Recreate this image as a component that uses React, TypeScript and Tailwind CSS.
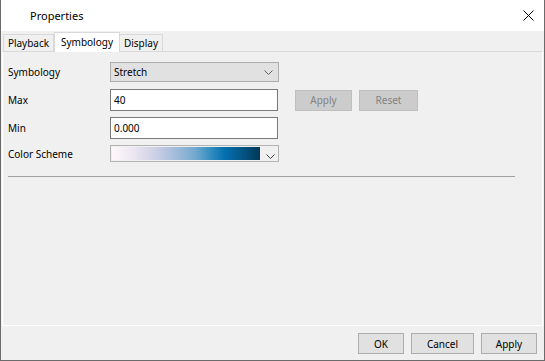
import React from "react";

function Chevron({ className }: { className?: string }) {
  return (
    <svg width="9" height="5" viewBox="0 0 9 5" className={className}>
      <path d="M0.5 0.5 L4.5 4.5 L8.5 0.5" fill="none" stroke="currentColor" strokeWidth="1" />
    </svg>
  );
}

export default function App() {
  return (
    <div
      className="w-[545px] h-[361px] flex flex-col bg-[#f0f0f0] border-x border-b border-[#6b6b6b] text-black overflow-hidden"
      style={{ fontFamily: '"Noto Sans", "Liberation Sans", sans-serif' }}
    >
      {/* Title bar */}
      <div className="h-[31px] bg-white flex items-center justify-between shrink-0">
        <span className="pl-[29px] text-[11px] leading-none">Properties</span>
        <svg width="11" height="11" viewBox="0 0 11 11" className="mr-[10px]">
          <path d="M0.5 0.5 L10.5 10.5 M10.5 0.5 L0.5 10.5" stroke="#000" strokeWidth="1" fill="none" />
        </svg>
      </div>

      {/* Tabs */}
      <div className="h-[20px] mt-[1px] mb-[-1px] pl-[2px] flex items-end relative z-10 shrink-0 text-[10px]">
        <div className="w-[51px] h-[18px] border border-[#d9d9d9] bg-[#f0f0f0] flex items-center justify-center leading-none">
          Playback
        </div>
        <div className="w-[66px] h-[20px] border border-b-0 border-[#d9d9d9] bg-white flex items-center justify-center leading-none pb-[1px]">
          Symbology
        </div>
        <div className="w-[43px] h-[18px] border border-l-0 border-[#d9d9d9] bg-[#f0f0f0] flex items-center justify-center leading-none">
          Display
        </div>
      </div>

      {/* Panel */}
      <div className="h-[275px] ml-[1px] mr-[1px] border border-white border-t-[#d9d9d9] bg-[#f0f0f0] shrink-0 pl-[5px] pt-[10px] text-[10px]">
        <div className="grid grid-cols-[102px_auto] items-center">
          <span className="leading-none">Symbology</span>
          <div className="w-[169px] h-[20px] bg-[#e1e1e1] border border-[#adadad] flex items-center justify-between pl-[3px] pr-[5px]">
            <span className="leading-none">Stretch</span>
            <Chevron className="text-[#606060]" />
          </div>
        </div>

        <div className="grid grid-cols-[102px_auto] items-center mt-[7px]">
          <span className="leading-none">Max</span>
          <div className="flex items-center">
            <div className="w-[168px] h-[22px] bg-white border border-[#7a7a7a] flex items-center pl-[3px]">
              <span className="leading-none">40</span>
            </div>
            <div className="ml-[17px] w-[57px] h-[21px] bg-[#cccccc] border border-[#bfbfbf] flex items-center justify-center text-[#838383] leading-none">
              Apply
            </div>
            <div className="ml-[7px] w-[59px] h-[21px] bg-[#cccccc] border border-[#bfbfbf] flex items-center justify-center text-[#838383] leading-none">
              Reset
            </div>
          </div>
        </div>

        <div className="grid grid-cols-[102px_auto] items-center mt-[6px]">
          <span className="leading-none">Min</span>
          <div className="w-[168px] h-[22px] bg-white border border-[#7a7a7a] flex items-center pl-[3px]">
            <span className="leading-none">0.000</span>
          </div>
        </div>

        <div className="grid grid-cols-[102px_auto] items-center mt-[6px]">
          <span className="leading-none">Color Scheme</span>
          <div className="w-[169px] h-[17px] bg-[#f0f0f0] border border-[#b4b4b4] flex items-center pl-[1px]">
            <div className="w-[148px] h-[13px] bg-[linear-gradient(to_right,#fff7fb_0%,#ece7f2_14%,#d0d1e6_28%,#a6bddb_42%,#74a9cf_56%,#3690c0_66%,#0570b0_76%,#045a8d_86%,#023858_100%)]" />
            <Chevron className="ml-[6px] mt-[5px] text-[#404040]" />
          </div>
        </div>

        <div className="mt-[14px] w-[507px] border-t border-[#a0a0a0]" />
      </div>

      {/* Footer buttons */}
      <div className="flex justify-end gap-[7px] pr-[7px] pt-[7px] text-[10px]">
        <div className="w-[46px] h-[21px] bg-[#e1e1e1] border border-[#adadad] flex items-center justify-center leading-none">OK</div>
        <div className="w-[63px] h-[21px] bg-[#e1e1e1] border border-[#adadad] flex items-center justify-center leading-none">Cancel</div>
        <div className="w-[56px] h-[21px] bg-[#e1e1e1] border border-[#adadad] flex items-center justify-center leading-none">Apply</div>
      </div>
    </div>
  );
}
